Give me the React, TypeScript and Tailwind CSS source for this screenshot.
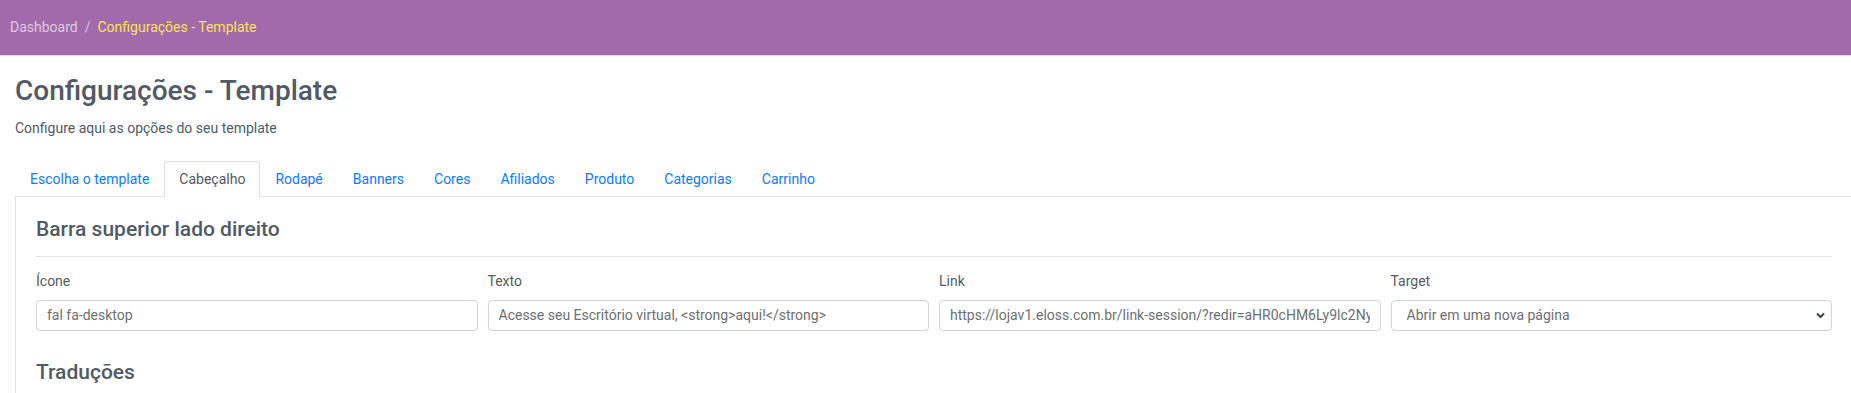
const tabs = [
  "Escolha o template",
  "Cabeçalho",
  "Rodapé",
  "Banners",
  "Cores",
  "Afiliados",
  "Produto",
  "Categorias",
  "Carrinho",
];

const inputCls =
  "block w-full h-[31px] rounded-[4px] border border-[#ced4da] bg-white px-[10px] text-[14px] text-[#6c6f73] outline-none";

const App = () => {
  return (
    <div className="min-h-screen bg-white font-['Roboto','Liberation_Sans',sans-serif] overflow-hidden">
      <div className="h-[56px] bg-[#a26aab] border-b border-[#dcdcdc] flex items-center px-[10px] text-[14px] leading-[21px]">
        <span className="text-[#dccbe0]">Dashboard</span>
        <span className="text-[#d6c4da] px-[7px]">/</span>
        <span className="text-[#f7e84a]">Configurações - Template</span>
      </div>

      <div className="pl-[15px]">
        <h1 className="mt-[18px] text-[28px] leading-[1.2] font-medium text-[#4f5a66]">
          Configurações - Template
        </h1>
        <p className="mt-[10px] text-[14px] leading-[21px] text-[#4f5a66]">
          Configure aqui as opções do seu template
        </p>

        <div className="mt-[22px] flex border-b border-[#dee2e6] w-[calc(100%+20px)]">
          {tabs.map((t, i) => (
            <div
              key={t}
              className={
                i === 1
                  ? "-mb-px px-[14px] py-[7px] text-[14px] leading-[20px] border border-[#dee2e6] border-b-white rounded-t-[4px] bg-white text-[#4f5a66]"
                  : "-mb-px px-[14px] py-[7px] text-[14px] leading-[20px] border border-transparent text-[#0b7bff]"
              }
            >
              {t}
            </div>
          ))}
        </div>

        <div className="border-l border-[#dee2e6] pl-[20px] pr-[19px] pt-[20px]">
          <h4 className="text-[21px] leading-[1.2] font-medium text-[#4f5a66]">
            Barra superior lado direito
          </h4>
          <hr className="mt-[14px] border-0 border-t border-[#e2e4e7]" />

          <div className="mt-[14px] grid grid-cols-4 gap-[10px]">
            <div>
              <label className="block mb-[8px] text-[14px] leading-[21px] text-[#555b61]">Ícone</label>
              <input readOnly className={inputCls} defaultValue="fal fa-desktop" />
            </div>
            <div>
              <label className="block mb-[8px] text-[14px] leading-[21px] text-[#555b61]">Texto</label>
              <input
                readOnly
                className={inputCls}
                defaultValue="Acesse seu Escritório virtual, <strong>aqui!</strong>"
              />
            </div>
            <div>
              <label className="block mb-[8px] text-[14px] leading-[21px] text-[#555b61]">Link</label>
              <input
                readOnly
                className={inputCls}
                defaultValue="https://lojav1.eloss.com.br/link-session/?redir=aHR0cHM6Ly9lc2NyaXRvcmlvLmVsb3NzLmNvbS5icg=="
              />
            </div>
            <div>
              <label className="block mb-[8px] text-[14px] leading-[21px] text-[#555b61]">Target</label>
              <div className="relative">
                <select
                  className="block w-full h-[31px] appearance-none rounded-[4px] border border-[#ced4da] bg-white pl-[15px] pr-[30px] text-[14px] text-[#6c6f73] outline-none"
                  defaultValue="_blank"
                >
                  <option value="_blank">Abrir em uma nova página</option>
                  <option value="_self">Abrir na mesma página</option>
                </select>
                <svg
                  className="pointer-events-none absolute right-[7px] top-[12px]"
                  width="9"
                  height="7"
                  viewBox="0 0 9 7"
                >
                  <path d="M1 1.5 L4.5 5 L8 1.5" fill="none" stroke="#3c4247" strokeWidth="2" />
                </svg>
              </div>
            </div>
          </div>

          <h4 className="mt-[29px] text-[21px] leading-[1.2] font-medium text-[#4f5a66]">
            Traduções
          </h4>
          <div className="h-[40px]" />
        </div>
      </div>
    </div>
  );
};

export default App;
